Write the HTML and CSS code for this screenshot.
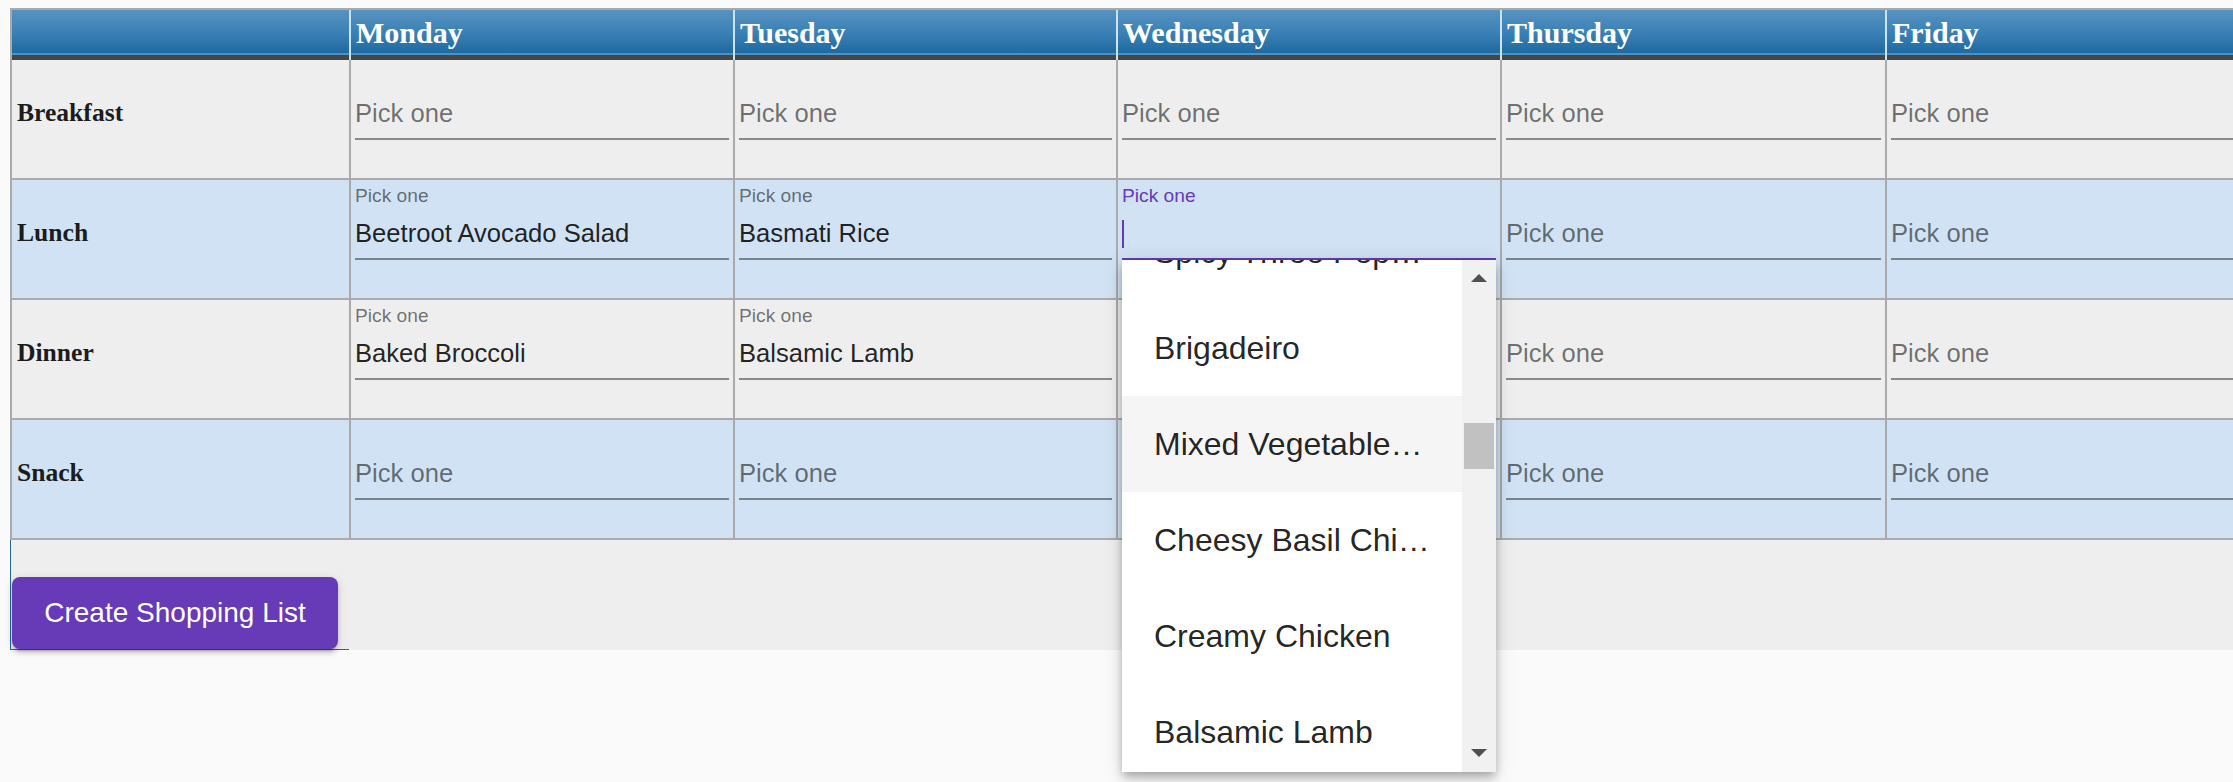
FILE: index.html
```html
<!DOCTYPE html>
<html lang="en">
<head>
<meta charset="utf-8">
<title>Meal Planner</title>
<link rel="stylesheet" href="styles.css">
</head>
<body>
<div class="planner">
  <div class="grid">
    <div class="hd"></div>
    <div class="hd">Monday</div>
    <div class="hd">Tuesday</div>
    <div class="hd">Wednesday</div>
    <div class="hd">Thursday</div>
    <div class="hd">Friday</div>

    <div class="c lbl odd">Breakfast</div>
    <div class="c odd"><div class="field"><div class="flabel"></div><div class="finput ph">Pick one</div><div class="uline"></div></div></div>
    <div class="c odd"><div class="field"><div class="flabel"></div><div class="finput ph">Pick one</div><div class="uline"></div></div></div>
    <div class="c odd"><div class="field"><div class="flabel"></div><div class="finput ph">Pick one</div><div class="uline"></div></div></div>
    <div class="c odd"><div class="field"><div class="flabel"></div><div class="finput ph">Pick one</div><div class="uline"></div></div></div>
    <div class="c odd"><div class="field"><div class="flabel"></div><div class="finput ph">Pick one</div><div class="uline"></div></div></div>

    <div class="c lbl even">Lunch</div>
    <div class="c even"><div class="field"><div class="flabel">Pick one</div><div class="finput">Beetroot Avocado Salad</div><div class="uline"></div></div></div>
    <div class="c even"><div class="field"><div class="flabel">Pick one</div><div class="finput">Basmati Rice</div><div class="uline"></div></div></div>
    <div class="c even"><div class="field focus">
      <div class="flabel">Pick one</div>
      <div class="finput"><span class="caret"></span></div>
      <div class="uline"></div>
      <div class="panel">
        <div class="opts">
          <div class="opt first">Spicy Three Pepper Pasta</div>
          <div class="opt">Brigadeiro</div>
          <div class="opt active">Mixed Vegetables Stir Fry</div>
          <div class="opt">Cheesy Basil Chicken</div>
          <div class="opt">Creamy Chicken</div>
          <div class="opt">Balsamic Lamb</div>
        </div>
        <div class="sbar">
          <div class="sbtn up"><svg width="16" height="8" viewBox="0 0 16 8"><polygon points="0,8 8,0 16,8" fill="#505050"/></svg></div>
          <div class="strack"><div class="sthumb"></div></div>
          <div class="sbtn down"><svg width="16" height="8" viewBox="0 0 16 8"><polygon points="0,0 16,0 8,8" fill="#505050"/></svg></div>
        </div>
      </div>
    </div></div>
    <div class="c even"><div class="field"><div class="flabel"></div><div class="finput ph">Pick one</div><div class="uline"></div></div></div>
    <div class="c even"><div class="field"><div class="flabel"></div><div class="finput ph">Pick one</div><div class="uline"></div></div></div>

    <div class="c lbl odd">Dinner</div>
    <div class="c odd"><div class="field"><div class="flabel">Pick one</div><div class="finput">Baked Broccoli</div><div class="uline"></div></div></div>
    <div class="c odd"><div class="field"><div class="flabel">Pick one</div><div class="finput">Balsamic Lamb</div><div class="uline"></div></div></div>
    <div class="c odd"><div class="field"><div class="flabel"></div><div class="finput ph">Pick one</div><div class="uline"></div></div></div>
    <div class="c odd"><div class="field"><div class="flabel"></div><div class="finput ph">Pick one</div><div class="uline"></div></div></div>
    <div class="c odd"><div class="field"><div class="flabel"></div><div class="finput ph">Pick one</div><div class="uline"></div></div></div>

    <div class="c lbl even">Snack</div>
    <div class="c even"><div class="field"><div class="flabel"></div><div class="finput ph">Pick one</div><div class="uline"></div></div></div>
    <div class="c even"><div class="field"><div class="flabel"></div><div class="finput ph">Pick one</div><div class="uline"></div></div></div>
    <div class="c even"><div class="field"><div class="flabel"></div><div class="finput ph">Pick one</div><div class="uline"></div></div></div>
    <div class="c even"><div class="field"><div class="flabel"></div><div class="finput ph">Pick one</div><div class="uline"></div></div></div>
    <div class="c even"><div class="field"><div class="flabel"></div><div class="finput ph">Pick one</div><div class="uline"></div></div></div>
  </div>
  <div class="footer"><button class="btn">Create Shopping List</button></div>
</div>
</body>
</html>
```

FILE: styles.css
```css
html {
  margin: 0;
  padding: 0;
  background: #fafafa;
  overflow: hidden;
}
body {
  margin: 0;
  padding: 0;
  min-height: 782px;
  font-family: "Liberation Sans", Arial, sans-serif;
}
.planner {
  margin: 8px 0 0 10px;
  background: #eeeeee;
  border-top: 2px solid #aaaaaa;
}
.grid {
  display: grid;
  grid-template-columns: 339px 384px 383px 384px 385px 384px;
  border-left: 2px solid #aaaaaa;
  width: max-content;
}
.hd {
  height: 50px;
  box-sizing: border-box;
  border-right: 2px solid #cfe2f2;
  background: linear-gradient(to bottom, #5793c1 0, #3b81b5 22px, #1f6aa1 43px, #4b92c7 43px, #4b92c7 45px, #464646 45px, #464646 50px);
  color: #ffffff;
  font: bold 30px/34px "Liberation Serif", "Times New Roman", serif;
  padding: 6px 0 0 5px;
  white-space: nowrap;
}
.c {
  height: 120px;
  box-sizing: border-box;
  border-right: 2px solid #aaaaaa;
  border-bottom: 2px solid #aaaaaa;
  padding: 0 4px;
}
.odd { background: #eeeeee; }
.even { background: #d0e2f3; }
.lbl {
  font: bold 25.6px/28px "Liberation Serif", "Times New Roman", serif;
  color: #1c1c1c;
  padding: 39px 0 0 5px;
}
.field {
  position: relative;
  padding-top: 5px;
}
.flabel {
  height: 22px;
  font-size: 19.2px;
  line-height: 22px;
  color: rgba(0, 0, 0, 0.54);
  white-space: nowrap;
}
.finput {
  margin-top: 11px;
  height: 30px;
  font-size: 25.6px;
  line-height: 30px;
  color: rgba(0, 0, 0, 0.87);
  white-space: nowrap;
  overflow: hidden;
}
.finput.ph {
  color: rgba(0, 0, 0, 0.54);
}
.uline {
  margin-top: 10px;
  height: 2px;
  background: rgba(0, 0, 0, 0.42);
}
.focus .flabel { color: #673ab7; }
.focus .uline { background: #673ab7; }
.caret {
  display: inline-block;
  vertical-align: top;
  margin-top: 2px;
  width: 2px;
  height: 28px;
  background: #673ab7;
}
.panel {
  position: absolute;
  top: 100%;
  left: 0;
  right: 0;
  height: 512px;
  background: #ffffff;
  display: flex;
  z-index: 10;
  box-shadow: 0 4px 8px -2px rgba(0, 0, 0, 0.2), 0 8px 10px 0 rgba(0, 0, 0, 0.14), 0 2px 20px 0 rgba(0, 0, 0, 0.12);
}
.opts {
  flex: 1;
  min-width: 0;
  overflow: hidden;
}
.opt {
  height: 96px;
  line-height: 96px;
  font-size: 32px;
  padding: 0 30px 0 32px;
  color: rgba(0, 0, 0, 0.87);
  white-space: nowrap;
  overflow: hidden;
  text-overflow: ellipsis;
}
.opt.first { margin-top: -56px; }
.opt.active { background: #f5f5f5; }
.sbar {
  width: 34px;
  background: #f1f1f1;
  display: flex;
  flex-direction: column;
}
.sbtn {
  height: 34px;
  box-sizing: border-box;
  display: flex;
  align-items: center;
  justify-content: center;
}
.sbtn svg { display: block; }
.sbtn.up { padding-top: 2px; }
.sbtn.down { padding-bottom: 4px; }
.strack { flex: 1; }
.sthumb {
  margin: 129px 2px 0;
  height: 46px;
  background: #c1c1c1;
}
.footer {
  width: 339px;
  height: 110px;
  box-sizing: border-box;
  border-left: 1px solid #1d6b9e;
  border-bottom: 1px solid #1d6b9e;
  padding: 37px 0 0 1px;
}
.btn {
  display: block;
  width: 326px;
  height: 72px;
  padding: 0;
  border: 0;
  border-radius: 8px;
  background: #673ab7;
  color: #ffffff;
  font: 28px "Liberation Sans", Arial, sans-serif;
  box-shadow: 0 6px 2px -4px rgba(0, 0, 0, 0.2), 0 4px 4px 0 rgba(0, 0, 0, 0.14), 0 2px 10px 0 rgba(0, 0, 0, 0.12);
}
```
